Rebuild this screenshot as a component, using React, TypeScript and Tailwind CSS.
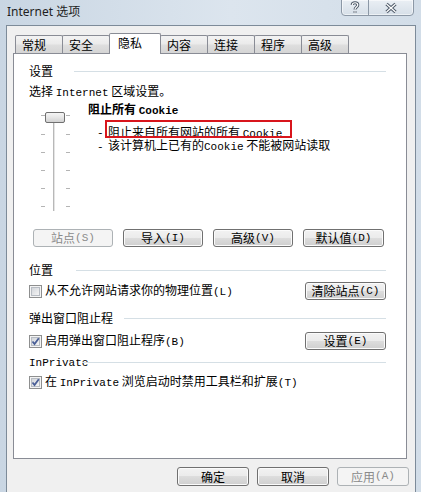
const cjk = "font-['Noto_Sans_CJK_SC',sans-serif]";

function L({ children }: { children: React.ReactNode }) {
  return <span className="font-['Liberation_Mono',monospace] text-[11px]">{children}</span>;
}

function Btn({ children, className = "", disabled }: { children: React.ReactNode; className?: string; disabled?: boolean }) {
  return (
    <div
      className={`flex h-[18px] shrink-0 items-center justify-center rounded-[3px] border leading-none ${
        disabled
          ? "border-[#adb2b5] bg-[#f4f4f4] text-[#8a8a8a]"
          : "border-[#707070] bg-[linear-gradient(#f2f2f2,#ebebeb_50%,#dddddd_50%,#cfcfcf)] text-black shadow-[inset_0_0_0_1px_#fbfbfb]"
      } ${className}`}
    >
      {children}
    </div>
  );
}

function Heading({ label, labelW }: { label: React.ReactNode; labelW: string }) {
  return (
    <div className="flex h-[14px] items-center leading-[14px]">
      <span className={`${labelW} shrink-0`}>{label}</span>
      <div className="h-px flex-1 bg-[#d5dfe5]" />
    </div>
  );
}

function Check({ checked }: { checked?: boolean }) {
  return (
    <span className="relative flex h-[13px] w-[13px] shrink-0 items-center justify-center border border-[#8e8f8f] bg-[#f4f4f4]">
      <span className="h-[9px] w-[9px] border border-[#b7bcc3] bg-[linear-gradient(135deg,#d3d6db,#f4f4f4)]" />
      {checked && (
        <svg className="absolute left-0 top-0" width="11" height="11" viewBox="0 0 11 11">
          <path d="M2.5 5.5 L4.5 8 L8.8 2.2" fill="none" stroke="#4a5f97" strokeWidth="1.8" />
        </svg>
      )}
    </span>
  );
}

function Slider() {
  const ticks = [17, 36, 54, 72, 90, 108];
  return (
    <svg width="59" height="115" viewBox="0 0 59 115" className="shrink-0">
      <defs>
        <linearGradient id="thumb" x1="0" y1="0" x2="0" y2="1">
          <stop offset="0" stopColor="#f7f7f7" />
          <stop offset="0.5" stopColor="#e6e6e6" />
          <stop offset="1" stopColor="#cfcfcf" />
        </linearGradient>
      </defs>
      {ticks.map((y) => (
        <g key={y}>
          <line x1="12" x2="16" y1={y + 0.5} y2={y + 0.5} stroke="#b4b4b4" />
          <line x1="37" x2="41" y1={y + 0.5} y2={y + 0.5} stroke="#b4b4b4" />
        </g>
      ))}
      <line x1="24.5" x2="24.5" y1="20" y2="113" stroke="#b8b8b8" />
      <line x1="25.5" x2="25.5" y1="20" y2="113" stroke="#e4e4e4" />
      <rect x="16.5" y="14.5" width="19" height="10" rx="1.5" fill="url(#thumb)" stroke="#707070" />
    </svg>
  );
}

const tabs = ["常规", "安全", "隐私", "内容", "连接", "程序", "高级"];

export default function App() {
  return (
    <div
      className={`flex h-[492px] w-[421px] flex-col overflow-hidden bg-[linear-gradient(90deg,#c9d6e3,#dce5ee_55%,#d2dde8)] ${cjk} text-[12px] text-black`}
    >
      {/* title bar */}
      <div className="flex h-[25px] shrink-0 items-start justify-between">
        <div className="ml-[7px] mt-[5px] font-['Noto_Sans','Noto_Sans_CJK_SC',sans-serif] text-[12px] leading-[14px] text-[#1e1e1e]">
          Internet 选项
        </div>
        <div className="-mt-px mr-[7px] flex h-[17px] rounded-b-[4px] border border-[#8c98a6] bg-[linear-gradient(#eaeff4,#d6dfe8)] shadow-[inset_0_0_0_1px_rgba(255,255,255,0.55)]">
          <div className="flex w-[27px] items-center justify-center border-r border-[#8c98a6]">
            <svg width="10" height="13" viewBox="0 0 10 13">
              <path d="M2.2 4 C2.2 1 7.8 1 7.8 4 C7.8 6 5 6.2 5 8.4 M5 10.2 L5 11.8" fill="none" stroke="#4b5766" strokeWidth="3" />
              <path d="M2.2 4 C2.2 1 7.8 1 7.8 4 C7.8 6 5 6.2 5 8.4 M5 10.2 L5 11.8" fill="none" stroke="#ffffff" strokeWidth="1.2" />
            </svg>
          </div>
          <div className="flex w-[44px] items-center justify-center">
            <svg width="14" height="12" viewBox="0 0 14 12">
              <path d="M2.5 2 L11.5 10 M11.5 2 L2.5 10" fill="none" stroke="#4b5766" strokeWidth="3.2" />
              <path d="M2.5 2 L11.5 10 M11.5 2 L2.5 10" fill="none" stroke="#ffffff" strokeWidth="1.3" />
            </svg>
          </div>
        </div>
      </div>

      {/* client area */}
      <div className="ml-[6px] mr-[5px] flex-1 border border-b-0 border-[#7d8b99] bg-[#f0f0f0] pl-[6px] pr-[8px] pt-[7px]">
        {/* tabs */}
        <div className="relative z-10 -mb-px ml-[2px] flex h-[21px] items-end">
          {tabs.map((t, i) => {
            const active = t === "隐私";
            return (
              <div
                key={t}
                className={`flex items-center rounded-t-[2px] border border-b-0 border-[#898c95] leading-none ${i > 0 ? "-ml-px" : ""} ${
                  active
                    ? "h-[21px] w-[52px] bg-white pb-[2px] pl-[8px]"
                    : "mb-px h-[18px] w-[48px] bg-[linear-gradient(#f3f3f3,#ebebeb_45%,#dedede_55%,#d5d5d5)] pl-[6px]"
                }`}
              >
                {t}
              </div>
            );
          })}
        </div>

        {/* panel */}
        <div className="flex h-[406px] flex-col border border-[#898c95] bg-white pl-[15px] pr-[20px]">
          <div className="mt-[10px]">
            <Heading label="设置" labelW="w-[45px]" />
          </div>
          <div className="mt-[6px] h-[14px] leading-[14px]">
            选择 <L>Internet</L> 区域设置。
          </div>

          <div className="flex h-[131px]">
            <Slider />
            <div className="flex flex-col">
              <div className="mt-[4px] h-[14px] font-bold leading-[14px]">
                阻止所有 <span className="font-['Liberation_Mono',monospace] text-[11px] font-bold">Cookie</span>
              </div>
              <div className="mt-[9px] flex h-[13px] items-center leading-[13px]">
                <span className="ml-[9px] w-[11px]">
                  <L>-</L>
                </span>
                <span className="relative h-[13px]">
                  阻止来自所有网站的所有 <L>Cookie</L>
                  <span className="absolute -left-[3px] -top-[5px] h-[18px] w-[187px] border-2 border-[#d8151c]" />
                </span>
              </div>
              <div className="mt-px flex h-[13px] items-center leading-[13px]">
                <span className="ml-[9px] w-[11px]">
                  <L>-</L>
                </span>
                <span>
                  该计算机上已有的<L>Cookie</L> 不能被网站读取
                </span>
              </div>
            </div>
          </div>

          <div className="ml-[4px] flex gap-[10px]">
            <Btn className="w-[80px]" disabled>
              站点<L>(S)</L>
            </Btn>
            <Btn className="w-[80px]">
              导入<L>(I)</L>
            </Btn>
            <Btn className="w-[80px]">
              高级<L>(V)</L>
            </Btn>
            <Btn className="w-[81px]">
              默认值<L>(D)</L>
            </Btn>
          </div>

          <div className="mt-[16px]">
            <Heading label="位置" labelW="w-[47px]" />
          </div>
          <div className="mt-[5px] flex h-[18px] items-center justify-between">
            <div className="flex items-center gap-[3px] leading-[14px]">
              <Check />
              <span>
                从不允许网站请求你的物理位置<L>(L)</L>
              </span>
            </div>
            <Btn className="w-[81px]">
              清除站点<L>(C)</L>
            </Btn>
          </div>

          <div className="mt-[11px]">
            <Heading label="弹出窗口阻止程" labelW="w-[95px]" />
          </div>
          <div className="mt-[7px] flex h-[18px] items-center justify-between">
            <div className="flex items-center gap-[3px] leading-[14px]">
              <Check checked />
              <span>
                启用弹出窗口阻止程序<L>(B)</L>
              </span>
            </div>
            <Btn className="w-[81px]">
              设置<L>(E)</L>
            </Btn>
          </div>

          <div className="mt-[5px]">
            <Heading label={<L>InPrivate</L>} labelW="w-[53px]" />
          </div>
          <div className="mt-[6px] flex h-[14px] items-center gap-[3px] leading-[14px]">
            <Check checked />
            <span>
              在 <L>InPrivate</L> 浏览启动时禁用工具栏和扩展<L>(T)</L>
            </span>
          </div>
        </div>

        {/* dialog buttons */}
        <div className="-mr-[2px] mt-[8px] flex justify-end gap-[8px]">
          <Btn className="h-[19px] w-[72px]">确定</Btn>
          <Btn className="h-[19px] w-[72px]">取消</Btn>
          <Btn className="h-[19px] w-[72px]" disabled>
            应用<L>(A)</L>
          </Btn>
        </div>
      </div>
    </div>
  );
}
